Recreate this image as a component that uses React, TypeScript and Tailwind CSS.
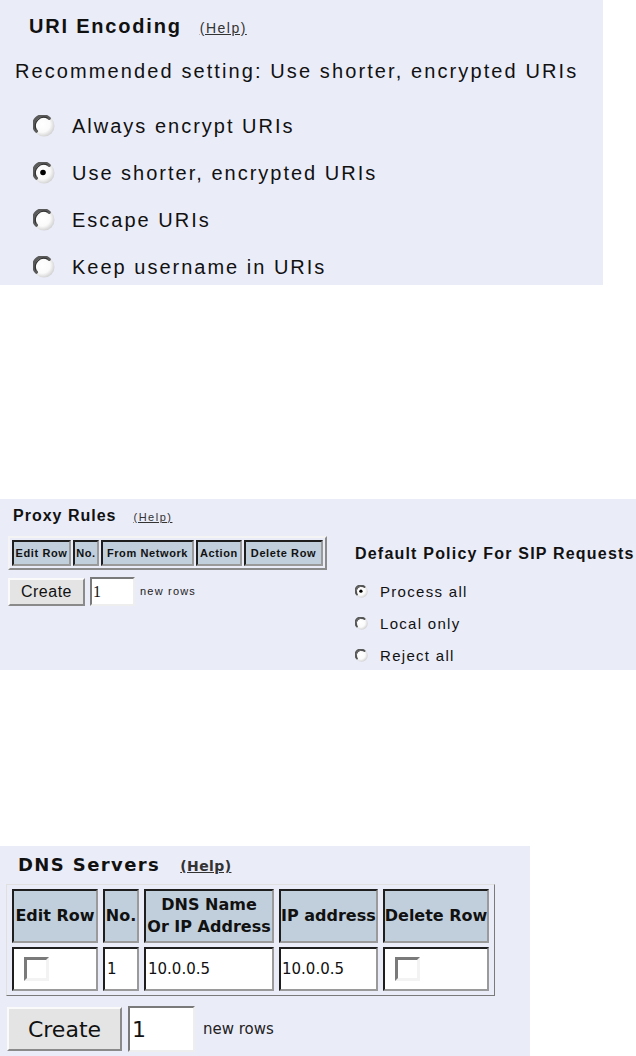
import React from "react";

const Radio = ({ size, checked }: { size: number; checked?: boolean }) => (
  <svg width={size} height={size} viewBox="0 0 22 22" className="shrink-0">
    <defs>
      <radialGradient id="rg" cx="42%" cy="42%" r="62%">
        <stop offset="0%" stopColor="#ffffff" />
        <stop offset="60%" stopColor="#fafafa" />
        <stop offset="100%" stopColor="#cfcfcf" />
      </radialGradient>
    </defs>
    <circle cx="11" cy="11" r="10.5" fill="url(#rg)" />
    <path d="M3.4 16.2 A9 9 0 0 1 16.2 3.4" fill="none" stroke="#5a5a5a" strokeWidth="3.2" strokeLinecap="round" />
    <path d="M2.8 14 A8.8 8.8 0 0 1 14 2.8" fill="none" stroke="#333" strokeWidth="1.2" strokeLinecap="round" />
    {checked && <circle cx="10" cy="10.5" r="2.8" fill="#000" />}
  </svg>
);

const Checkbox = () => (
  <div className="ml-[10px] w-[25px] h-[24px] bg-white border-[3px] border-t-[#7a7a7a] border-l-[#7a7a7a] border-r-[#f3f3f3] border-b-[#f3f3f3]" />
);

const th2 =
  "h-[26px] p-0 bg-[#c1cfdc] border-2 border-t-[#1e1e1e] border-l-[#1e1e1e] border-r-[#9a9a9a] border-b-[#9a9a9a] text-[11px] font-bold tracking-[0.6px] whitespace-nowrap text-center text-[#111]";

const th3 =
  "h-[54px] p-0 bg-[#c1cfdc] border-2 border-t-[#1e1e1e] border-l-[#1e1e1e] border-r-[#9a9a9a] border-b-[#9a9a9a] text-[16px] leading-[22px] font-bold whitespace-nowrap text-center text-[#111]";

const td3 =
  "h-[44px] p-0 bg-white border-2 border-t-[#1e1e1e] border-l-[#1e1e1e] border-r-[#9a9a9a] border-b-[#9a9a9a] text-[15px] text-left align-middle text-[#111]";

export default function App() {
  return (
    <div className="w-[636px] h-[1056px] bg-white overflow-hidden">
      {/* Panel 1 */}
      <div className="w-[603px] h-[285px] bg-[#eaecf8] font-[family-name:'Liberation_Sans',Arial,sans-serif] text-[#111]">
        <div className="h-[52px] flex items-center pl-[29px]">
          <div className="flex items-baseline">
            <span className="text-[20px] leading-none font-bold tracking-[1.8px]">URI Encoding</span>
            <span className="ml-[18px] text-[14px] leading-none underline tracking-[1.5px] text-[#333]">(Help)</span>
          </div>
        </div>
        <div className="h-[38px] flex items-center pl-[15px] text-[20px] leading-none tracking-[2.1px]">
          Recommended setting: Use shorter, encrypted URIs
        </div>
        <div className="mt-[12px]">
          {[
            ["Always encrypt URIs", false],
            ["Use shorter, encrypted URIs", true],
            ["Escape URIs", false],
            ["Keep username in URIs", false],
          ].map(([label, checked]) => (
            <div key={label as string} className="h-[47px] flex items-center pl-[33px] gap-[17px]">
              <Radio size={22} checked={checked as boolean} />
              <span className="text-[20px] leading-none tracking-[2px]">{label as string}</span>
            </div>
          ))}
        </div>
      </div>

      {/* Panel 2 */}
      <div className="mt-[214px] w-[636px] h-[171px] bg-[#eaecf8] flex font-[family-name:'Liberation_Sans',Arial,sans-serif] text-[#111]">
        <div className="w-[355px] shrink-0 pl-[8px]">
          <div className="h-[34px] flex items-center pl-[5px]">
            <div className="flex items-baseline">
              <span className="text-[16px] leading-none font-bold tracking-[1px]">Proxy Rules</span>
              <span className="ml-[17px] text-[11px] leading-none underline tracking-[1.5px] text-[#333]">(Help)</span>
            </div>
          </div>
          <table className="mt-[3px] border-separate border-spacing-[2px] border-2 border-t-[#f4f4f4] border-l-[#f4f4f4] border-r-[#8a8a8a] border-b-[#8a8a8a]">
            <tbody>
              <tr>
                <th className={th2 + " w-[59px]"}>Edit Row</th>
                <th className={th2 + " w-[26px]"}>No.</th>
                <th className={th2 + " w-[93px]"}>From Network</th>
                <th className={th2 + " w-[46px]"}>Action</th>
                <th className={th2 + " w-[79px]"}>Delete Row</th>
              </tr>
            </tbody>
          </table>
          <div className="mt-[7px] flex items-center">
            <div className="w-[77px] h-[28px] bg-[#e4e4e4] border-2 border-t-[#fafafa] border-l-[#fafafa] border-r-[#8a8a8a] border-b-[#8a8a8a] flex items-center justify-center text-[16px] tracking-[0.5px] text-[#111]">
              Create
            </div>
            <div className="ml-[5px] w-[45px] h-[29px] bg-white border-2 border-t-[#7a7a7a] border-l-[#7a7a7a] border-r-[#eeeeee] border-b-[#eeeeee] flex items-center pl-[1px] font-[family-name:'Liberation_Serif',serif] text-[16px] text-[#111]">
              1
            </div>
            <span className="ml-[5px] text-[11px] tracking-[1.2px] text-[#222]">new rows</span>
          </div>
        </div>
        <div className="pt-[44px]">
          <div className="h-[22px] flex items-center text-[16px] leading-none font-bold tracking-[1.2px] whitespace-nowrap">
            Default Policy For SIP Requests
          </div>
          <div className="mt-[10px]">
            {[
              ["Process all", true],
              ["Local only", false],
              ["Reject all", false],
            ].map(([label, checked]) => (
              <div key={label as string} className="h-[32px] flex items-center gap-[12px]">
                <Radio size={13} checked={checked as boolean} />
                <span className="text-[15px] leading-none tracking-[1.3px]">{label as string}</span>
              </div>
            ))}
          </div>
        </div>
      </div>

      {/* Panel 3 */}
      <div className="mt-[176px] w-[530px] h-[210px] bg-[#eaecf8] font-[family-name:'DejaVu_Sans',sans-serif] text-[#111]">
        <div className="h-[38px] flex items-center pl-[18px]">
          <div className="flex items-baseline">
            <span className="text-[18px] leading-none font-bold tracking-[1.4px]">DNS Servers</span>
            <span className="ml-[20px] text-[14px] leading-none font-bold underline tracking-[0.4px] text-[#333]">(Help)</span>
          </div>
        </div>
        <table className="ml-[6px] border-separate border-spacing-x-[5px] border-spacing-y-[4px] border border-t-[#e0e0e0] border-l-[#e0e0e0] border-r-[#7a7a7a] border-b-[#7a7a7a]">
          <tbody>
            <tr>
              <th className={th3 + " w-[86px]"}>Edit Row</th>
              <th className={th3 + " w-[36px]"}>No.</th>
              <th className={th3 + " w-[130px]"}>
                DNS Name
                <br />
                Or IP Address
              </th>
              <th className={th3 + " w-[98px]"}>IP address</th>
              <th className={th3 + " w-[106px]"}>Delete Row</th>
            </tr>
            <tr>
              <td className={td3}>
                <Checkbox />
              </td>
              <td className={td3 + " pl-[2px]"}>1</td>
              <td className={td3 + " pl-[2px]"}>10.0.0.5</td>
              <td className={td3 + " pl-[1px]"}>10.0.0.5</td>
              <td className={td3}>
                <Checkbox />
              </td>
            </tr>
          </tbody>
        </table>
        <div className="mt-[10px] flex items-center">
          <div className="ml-[7px] w-[115px] h-[44px] bg-[#e4e4e4] border-2 border-t-[#fafafa] border-l-[#fafafa] border-r-[#8a8a8a] border-b-[#8a8a8a] flex items-center justify-center text-[22px] text-[#111]">
            Create
          </div>
          <div className="ml-[6px] w-[67px] h-[46px] bg-white border-2 border-t-[#7a7a7a] border-l-[#7a7a7a] border-r-[#eeeeee] border-b-[#eeeeee] flex items-center pl-[2px] text-[22px] text-[#111]">
            1
          </div>
          <span className="ml-[8px] text-[15px] text-[#222]">new rows</span>
        </div>
      </div>
    </div>
  );
}
